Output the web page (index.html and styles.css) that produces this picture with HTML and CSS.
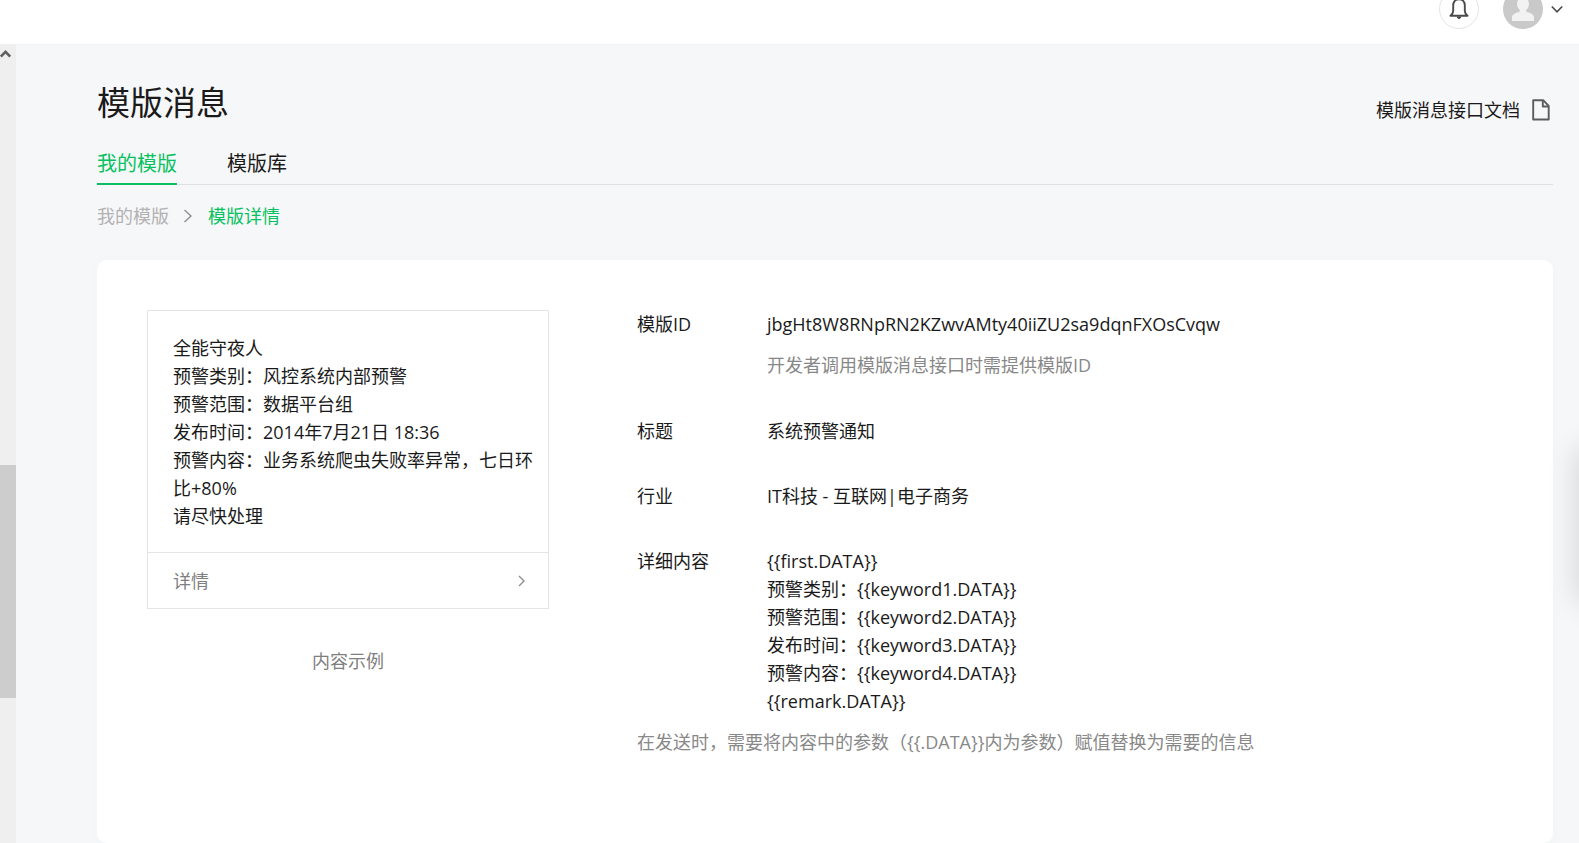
FILE: index.html
```html
<!DOCTYPE html>
<html lang="zh-CN">
<head>
<meta charset="utf-8">
<title>模版消息</title>
<link rel="stylesheet" href="styles.css">
</head>
<body>
<header class="topbar">
  <button class="bell" type="button" aria-label="通知">
    <svg width="20" height="24" viewBox="0 0 20 24" fill="none" stroke="#4a4a4a" stroke-width="1.900" stroke-linejoin="round"><path d="M10 2.200c-3.600 0-5.800 2.600-5.800 6.300v5.500c0 1.800-1 3.200-2.700 4.800h17c-1.700-1.600-2.700-3-2.700-4.800V8.500c0-3.700-2.200-6.300-5.800-6.300z"/><path d="M8.400 20.200h3.200L10 21.600z" fill="#4a4a4a" stroke-width="1.200"/></svg>
  </button>
  <button class="account" type="button" aria-label="账号">
    <svg class="avatar" width="40" height="40" viewBox="0 0 40 40"><circle cx="20" cy="20" r="20" fill="#c9c9c9"/><path d="M20 8.500c-3.600 0-6 2.800-6 6.300 0 2.600 1 4.700 2.700 6v2c-3.500 1-7.700 2.300-7.700 5.700V32h22v-3.500c0-3.400-4.200-4.700-7.700-5.700v-2c1.700-1.300 2.700-3.400 2.700-6 0-3.500-2.400-6.300-6-6.300z" fill="#f2f2f2"/></svg>
    <svg width="12" height="8" viewBox="0 0 12 8" fill="none" stroke="#4a4a4a" stroke-width="1.600"><path d="M.8 1.500 6 6.800l5.200-5.300"/></svg>
  </button>
</header>
<div class="body">
  <div class="scrollbar" aria-hidden="true">
    <svg class="scroll-arrow" width="11" height="9" viewBox="0 0 11 9" fill="none" stroke="#606060" stroke-width="2.600"><path d="M.8 7.500 5.500 2.800l4.700 4.700"/></svg>
    <div class="thumb"></div>
  </div>
  <main class="page">
    <div class="heading">
      <h1>模版消息</h1>
      <a class="doc" href="#">模版消息接口文档
        <svg width="18" height="22" viewBox="0 0 18 22" fill="none" stroke="#5c5c5c" stroke-width="1.900" stroke-linejoin="round"><path d="M1.200 1.200h10l5.500 5.800v13.500H1.200z"/><path d="M10.800 1.200v6.300h5.700"/></svg>
      </a>
    </div>
    <nav class="tabs">
      <a class="tab active" href="#">我的模版</a>
      <a class="tab" href="#">模版库</a>
    </nav>
    <nav class="crumbs">
      <a href="#">我的模版</a>
      <svg width="9" height="14" viewBox="0 0 9 14" fill="none" stroke="#8e8e8e" stroke-width="1.400"><path d="m.5 1 6.500 6-6.500 6"/></svg>
      <span class="current">模版详情</span>
    </nav>
    <section class="card">
      <figure class="sample">
        <div class="message">
          <div class="message-text">
            <p>全能守夜人</p>
            <p>预警类别：风控系统内部预警</p>
            <p>预警范围：数据平台组</p>
            <p>发布时间：2014年7月21日 18:36</p>
            <p>预警内容：业务系统爬虫失败率异常，七日环比+80%</p>
            <p>请尽快处理</p>
          </div>
          <a class="more" href="#">详情
            <svg width="8" height="12" viewBox="0 0 8 12" fill="none" stroke="#8e8e8e" stroke-width="1.400"><path d="m1 1 5 5-5 5"/></svg>
          </a>
        </div>
        <figcaption>内容示例</figcaption>
      </figure>
      <div class="info">
        <dl class="fields">
          <dt>模版ID</dt>
          <dd>jbgHt8W8RNpRN2KZwvAMty40iiZU2sa9dqnFXOsCvqw<p class="hint">开发者调用模版消息接口时需提供模版ID</p></dd>
          <dt>标题</dt>
          <dd>系统预警通知</dd>
          <dt>行业</dt>
          <dd>IT科技 - 互联网|电子商务</dd>
          <dt>详细内容</dt>
          <dd>{{first.DATA}}<br>预警类别：{{keyword1.DATA}}<br>预警范围：{{keyword2.DATA}}<br>发布时间：{{keyword3.DATA}}<br>预警内容：{{keyword4.DATA}}<br>{{remark.DATA}}</dd>
        </dl>
        <p class="hint">在发送时，需要将内容中的参数（{{.DATA}}内为参数）赋值替换为需要的信息</p>
      </div>
    </section>
  </main>
</div>
<div class="side-panel" aria-hidden="true"></div>
</body>
</html>
```

FILE: styles.css
```css
* { box-sizing: border-box; }
body, h1, p, dl, dd, figure { margin: 0; }
html, body { height: 100%; }
body {
  display: flex;
  flex-direction: column;
  overflow: hidden;
  background: #f6f7f9;
  color: #1a1a1a;
  font: 18px/28px "Open Sans", "Noto Sans CJK SC", sans-serif;
}
a { color: inherit; text-decoration: none; }
button { padding: 0; border: 0; background: none; cursor: pointer; }
svg { display: block; flex: none; }

.topbar {
  display: flex;
  flex: none;
  align-items: flex-end;
  justify-content: flex-end;
  gap: 24px;
  height: 44px;
  padding: 0 16px 15px 0;
  overflow: hidden;
  background: #fff;
}
.bell {
  display: grid;
  place-items: center;
  width: 40px;
  height: 40px;
  border: 1px solid #e4e4e4;
  border-radius: 50%;
}
.account { display: flex; align-items: center; gap: 8px; }

.body { display: flex; flex: 1; min-height: 0; }
.scrollbar {
  flex: none;
  width: 16px;
  background: #efefef;
}
.scroll-arrow { margin-top: 5px; }
.thumb { height: 233px; margin-top: 407px; background: #cdcdcd; }

.page {
  display: flex;
  flex: 1;
  flex-direction: column;
  padding: 36px 26px 0 81px;
  border-top: 1px solid #f2f3f5;
}
.heading { display: flex; align-items: center; justify-content: space-between; }
h1 { font-size: 33px; line-height: 44px; font-weight: 400; }
.doc { display: flex; align-items: center; gap: 12px; padding: 14px 3px 0 0; }
.tabs {
  display: flex;
  gap: 50px;
  margin-top: 25px;
  border-bottom: 1px solid #e0e1e3;
  font-size: 20px;
}
.tab { height: 35px; margin-bottom: -1px; }
.active { border-bottom: 2px solid #07c160; color: #07c160; }
.crumbs { display: flex; align-items: center; gap: 15px; margin-top: 17px; color: #b2b2b2; }
.current { color: #07c160; }

.card {
  display: flex;
  flex: 1;
  align-items: flex-start;
  gap: 88px;
  margin-top: 30px;
  padding: 50px;
  border-radius: 10px;
  background: #fff;
  box-shadow: 0 1px 15px rgba(0, 0, 0, .02);
}
.sample { flex: none; width: 402px; }
.message { border: 1px solid #e4e4e4; }
.message-text { padding: 23px 14px 22px 25px; }
.more {
  display: flex;
  align-items: center;
  justify-content: space-between;
  padding: 14px 22px 13px 25px;
  border-top: 1px solid #e4e4e4;
  color: #7f7f7f;
}
figcaption { margin-top: 38px; color: #7f7f7f; text-align: center; }
.info { flex: 1; }
.fields {
  display: grid;
  grid-template-columns: 130px 1fr;
  row-gap: 37px;
}
.hint { margin-top: 13px; padding-bottom: 1px; color: #888; }

.side-panel {
  position: absolute;
  top: 450px;
  left: 100%;
  width: 60px;
  height: 150px;
  box-shadow: 0 0 30px 2px rgba(0, 0, 0, .14);
}
```
